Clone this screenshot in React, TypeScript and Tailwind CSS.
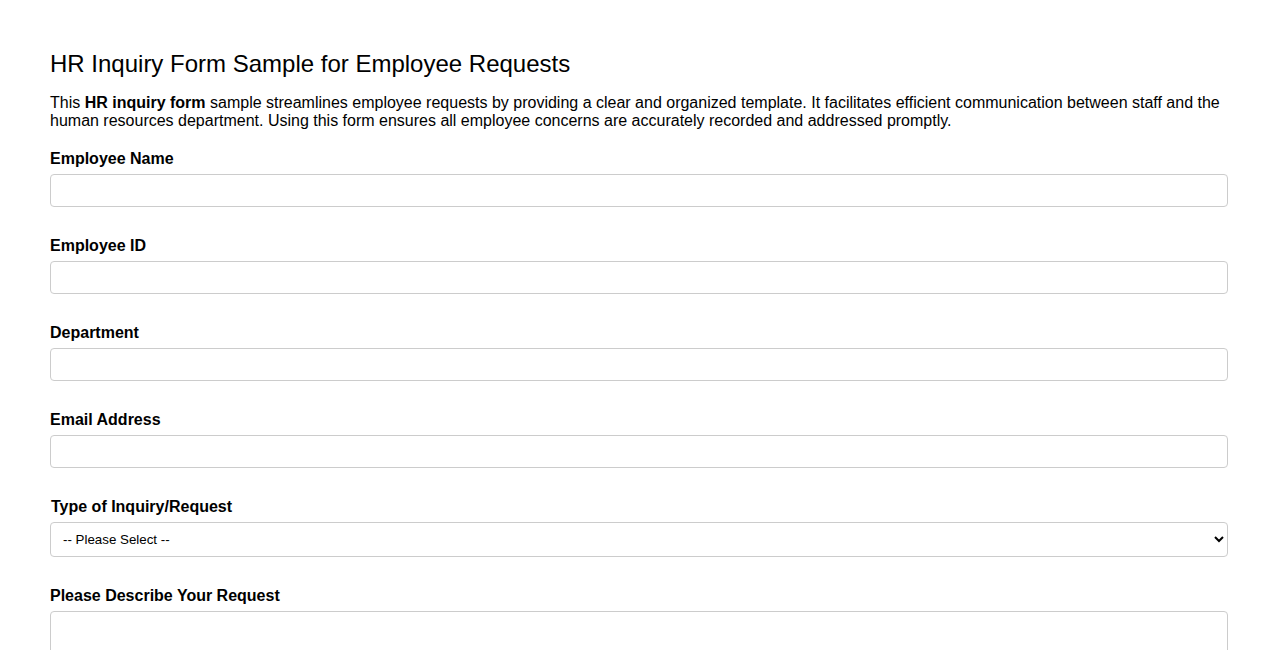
const fields = ['Employee Name', 'Employee ID', 'Department', 'Email Address'];

export default function App() {
  return (
    <div className="min-h-screen bg-white text-black px-[50px] pt-[50px] pb-10" style={{ fontFamily: '"Liberation Sans", Arial, sans-serif' }}>
      <h1 className="text-[24px] leading-[28px] font-normal">HR Inquiry Form Sample for Employee Requests</h1>
      <p className="text-[16px] leading-[18px] mt-[16px]">
        This <strong className="font-bold">HR inquiry form</strong> sample streamlines employee requests by providing a clear and organized template. It facilitates efficient communication between staff and the human resources department. Using this form ensures all employee concerns are accurately recorded and addressed promptly.
      </p>

      <form className="mt-[20px] flex flex-col gap-[30px]">
        {fields.map((f) => (
          <div key={f} className="flex flex-col">
            <label className="text-[16px] leading-[18px] font-bold">{f}</label>
            <input
              type="text"
              className="mt-[6px] h-[33px] w-full border border-[#cccccc] rounded-[4px] px-2 bg-white"
            />
          </div>
        ))}

        <div className="flex flex-col">
          <label className="text-[16px] leading-[18px] font-bold pl-px">Type of Inquiry/Request</label>
          <select className="mt-[6px] h-[35px] w-full border border-[#cccccc] rounded-[4px] px-2 bg-white text-[13.33px]">
            <option>-- Please Select --</option>
            <option>Payroll</option>
            <option>Benefits</option>
            <option>Leave Request</option>
            <option>Other</option>
          </select>
        </div>

        <div className="flex flex-col">
          <label className="text-[16px] leading-[18px] font-bold">Please Describe Your Request</label>
          <textarea className="mt-[6px] h-[120px] w-full border border-[#cccccc] rounded-[4px] px-2 bg-white" />
        </div>
      </form>
    </div>
  );
}
